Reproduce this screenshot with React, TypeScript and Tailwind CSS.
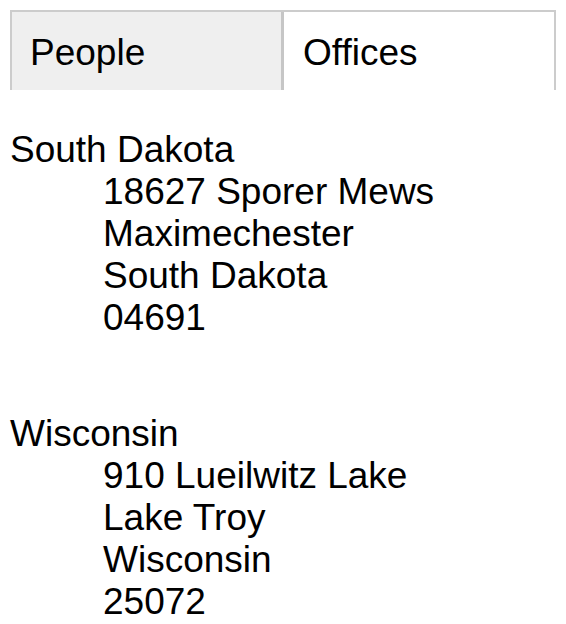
import React from 'react';

const offices = [
  { state: 'South Dakota', street: '18627 Sporer Mews', city: 'Maximechester', zip: '04691' },
  { state: 'Wisconsin', street: '910 Lueilwitz Lake', city: 'Lake Troy', zip: '25072' },
];

const App = () => {
  return (
    <div className="min-h-screen bg-white text-black font-['Liberation_Sans',Arial,sans-serif] text-[37px] leading-[42px]">
      {/* Tabs */}
      <div className="px-[10px] pt-[10px]">
        <div className="flex h-[80px] border-t-2 border-x-2 border-[#cccccc]">
          <div className="flex-1 flex items-center pl-[18px] pt-[3px] bg-[#efefef] border-r-[3px] border-[#c6c6c6]">
            People
          </div>
          <div className="flex-1 flex items-center pl-[19px] pt-[3px] bg-white">Offices</div>
        </div>
      </div>

      {/* Office list */}
      <div className="px-[10px] pt-[39px] flex flex-col gap-[74px]">
        {offices.map((o) => (
          <div key={o.state}>
            <div>{o.state}</div>
            <div className="pl-[93px]">
              <div>{o.street}</div>
              <div>{o.city}</div>
              <div>{o.state}</div>
              <div>{o.zip}</div>
            </div>
          </div>
        ))}
      </div>
    </div>
  );
};

export default App;
